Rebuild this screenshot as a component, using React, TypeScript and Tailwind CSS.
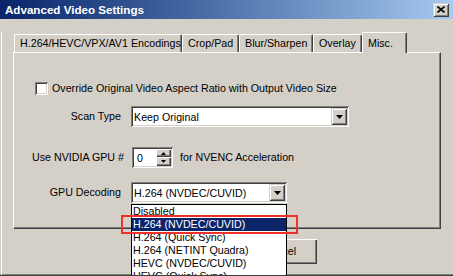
import React from "react";

// classic 3D edges
const sunken =
  "shadow-[inset_1px_1px_0_#808080,inset_-1px_-1px_0_#ffffff,inset_2px_2px_0_#404040,inset_-2px_-2px_0_#d4d0c8]";
const raised =
  "shadow-[inset_1px_1px_0_#ffffff,inset_-1px_-1px_0_#404040,inset_-2px_-2px_0_#808080]";
const raisedOuter =
  "shadow-[inset_1px_1px_0_#d4d0c8,inset_-1px_-1px_0_#404040,inset_2px_2px_0_#ffffff,inset_-2px_-2px_0_#808080]";

function DownArrow() {
  return (
    <svg width="7" height="4" viewBox="0 0 7 4">
      <path d="M0 0h7L3.5 4z" fill="#000" />
    </svg>
  );
}

function Combo({ width, value }: { width: string; value: string }) {
  return (
    <div className={`relative flex h-[21px] items-center bg-white ${width} ${sunken}`}>
      <span className="whitespace-nowrap pl-[3px] pt-px">{value}</span>
      <div className={`ml-auto mr-[2px] flex h-[17px] w-[16px] items-center justify-center bg-[#d4d0c8] ${raisedOuter}`}>
        <DownArrow />
      </div>
    </div>
  );
}

function Tab({ label, width }: { label: string; width: string }) {
  return (
    <div
      className={`mt-[2px] flex h-[18px] items-center whitespace-nowrap rounded-t-[2px] border-l border-t border-white border-r border-r-[#404040] pl-[5px] shadow-[inset_-1px_0_0_#808080] ${width}`}
    >
      {label}
    </div>
  );
}

export default function App() {
  const items = [
    "Disabled",
    "H.264 (NVDEC/CUVID)",
    "H.264 (Quick Sync)",
    "H.264 (NETINT Quadra)",
    "HEVC (NVDEC/CUVID)",
    "HEVC (Quick Sync)",
  ];

  return (
    <div className="relative h-[276px] w-[453px] overflow-hidden border-b border-[#404040] bg-[#d4d0c8] font-['Liberation_Sans',Arial,sans-serif] text-[10.7px] leading-none text-black">
      <div className="h-[275px] border-b border-[#808080]">
        {/* title bar */}
        <div className="flex h-[19px] items-center bg-linear-to-r from-[#0a246a] to-[#a6caf0] pl-[5px]">
          <span className="pt-px text-[11.6px] font-bold text-white">Advanced Video Settings</span>
          <div className={`ml-auto mr-[4px] flex h-[14px] w-[16px] items-center justify-center bg-[#d4d0c8] ${raisedOuter}`}>
            <svg width="8" height="7" viewBox="0 0 8 7">
              <path d="M0.5 0.5l7 6M7.5 0.5l-7 6" stroke="#000" strokeWidth="1.6" />
            </svg>
          </div>
        </div>

        <div className="ml-px h-[254px] border-l border-white">
          {/* tabs */}
          <div className="-mb-px ml-[12px] mt-[13px] flex h-[21px] items-start">
            <Tab label="H.264/HEVC/VPX/AV1 Encodings" width="w-[168px]" />
            <Tab label="Crop/Pad" width="w-[57px]" />
            <Tab label="Blur/Sharpen" width="w-[74px]" />
            <Tab label="Overlay" width="w-[49px]" />
            <div className="relative z-10 flex h-[21px] w-[45px] items-start rounded-t-[2px] border-l border-t border-white border-r border-r-[#404040] bg-[#d4d0c8] pl-[5px] pt-[5px] shadow-[inset_-1px_0_0_#808080]">
              Misc.
            </div>
          </div>

          {/* panel */}
          <div className="ml-[11px] h-[177px] w-[428px] border-l border-t border-white border-r border-b border-r-[#404040] border-b-[#404040] shadow-[inset_-1px_-1px_0_#808080]">
            <div className="ml-[21px] mt-[29px] flex h-[13px] items-center">
              <div className={`h-[13px] w-[13px] bg-white ${sunken}`} />
              <span className="ml-[4px]">Override Original Video Aspect Ratio with Output Video Size</span>
            </div>

            <div className="mt-[11px] flex items-center">
              <span className="w-[107px] text-right">Scan Type</span>
              <div className="ml-[10px]">
                <Combo width="w-[218px]" value="Keep Original" />
              </div>
            </div>

            <div className="mt-[20px] flex items-center">
              <span className="w-[110px] text-right">Use NVIDIA GPU #</span>
              <div className={`ml-[8px] flex h-[21px] w-[41px] items-center bg-white ${sunken}`}>
                <span className="pl-[5px] pt-px">0</span>
                <div className="ml-auto mr-[2px] flex flex-col">
                  <div className={`flex h-[8px] w-[15px] items-center justify-center bg-[#d4d0c8] ${raised}`}>
                    <svg width="5" height="3" viewBox="0 0 5 3">
                      <path d="M0 3h5L2.5 0z" fill="#000" />
                    </svg>
                  </div>
                  <div className={`flex h-[9px] w-[15px] items-center justify-center bg-[#d4d0c8] ${raised}`}>
                    <svg width="5" height="3" viewBox="0 0 5 3">
                      <path d="M0 0h5L2.5 3z" fill="#000" />
                    </svg>
                  </div>
                </div>
              </div>
              <span className="ml-[7px]">for NVENC Acceleration</span>
            </div>

            <div className="mt-[14px] flex items-center">
              <span className="w-[107px] text-right">GPU Decoding</span>
              <div className="ml-[10px]">
                <Combo width="w-[156px]" value="H.264 (NVDEC/CUVID)" />
              </div>
            </div>
          </div>

          {/* dialog buttons (OK sits under the open list) */}
          <div className="ml-[159px] mt-[10px] flex gap-[6px]">
            <div className={`h-[25px] w-[75px] bg-[#d4d0c8] ${raised}`} />
            <div className={`flex h-[25px] w-[75px] items-center justify-center bg-[#d4d0c8] ${raised}`}>Cancel</div>
          </div>
        </div>
      </div>

      {/* open drop-down list */}
      <div className="absolute left-[131px] top-[204px] w-[156px] border border-black bg-white">
        {items.map((it, i) => (
          <div
            key={it}
            className={`flex h-[13px] items-center whitespace-nowrap pl-px ${i === 1 ? "bg-[#0a246a] text-white" : ""}`}
          >
            {it}
          </div>
        ))}
      </div>

      {/* annotation box */}
      <div className="absolute left-[121px] top-[215px] h-[19px] w-[177px] border-2 border-[#f0312a]" />
    </div>
  );
}
